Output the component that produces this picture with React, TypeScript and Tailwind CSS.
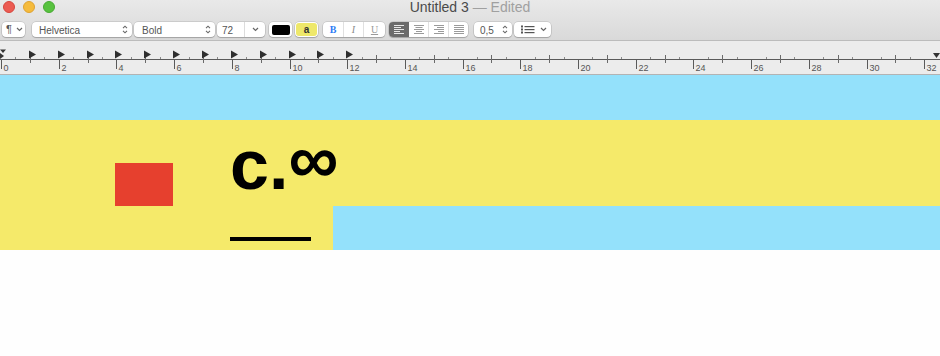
import React from 'react';

const U = 28.85;
const ux = (u: number) => 1 + u * U;

const UpDown = () => (
    <svg width="6" height="11" viewBox="0 0 6 11">
        <path d="M1 4.2L3 2.2L5 4.2M1 6.8L3 8.8L5 6.8" stroke="#666" strokeWidth="1.1" fill="none" />
    </svg>
);

const ChevronDown = () => (
    <svg width="7" height="5" viewBox="0 0 7 5">
        <path d="M1 1L3.5 3.5L6 1" stroke="#666" strokeWidth="1.2" fill="none" />
    </svg>
);

const AlignIcon = ({ kind, dark }: { kind: 'left' | 'center' | 'right' | 'justify'; dark?: boolean }) => {
    const widths = [10, 7, 10, 6, 10];
    const color = dark ? '#e8e8e8' : '#9a9a9a';
    return (
        <svg width="12" height="11" viewBox="0 0 12 11">
            {widths.map((w0, i) => {
                const w = kind === 'justify' ? 10 : w0;
                let x = 1;
                if (kind === 'center') x = 1 + (10 - w) / 2;
                if (kind === 'right') x = 11 - w;
                return <rect key={i} x={x} y={1 + i * 2} width={w} height="1" fill={color} />;
            })}
        </svg>
    );
};

const Ruler = () => {
    const units = Array.from({ length: 33 }, (_, i) => i);
    return (
        <svg width="940" height="33" viewBox="0 0 940 33" className="block">
            <line x1="0" y1="18.5" x2="940" y2="18.5" stroke="#5a5a5a" strokeWidth="1" />
            {units.map((u) => {
                const x = Math.round(ux(u)) + 0.5;
                if (u % 2 === 0) {
                    return (
                        <g key={u}>
                            <line x1={x} y1="18" x2={x} y2="28" stroke="#5a5a5a" strokeWidth="1" />
                            <text x={x + 2} y="29.5" fontSize="9" fill="#555" fontFamily="Liberation Sans, Arial, sans-serif">
                                {u}
                            </text>
                        </g>
                    );
                }
                return <line key={u} x1={x} y1="14" x2={x} y2="22" stroke="#6a6a6a" strokeWidth="1" />;
            })}
            {units.slice(0, 32).map((u) => {
                const x = Math.round(ux(u + 0.5)) + 0.5;
                return <line key={'h' + u} x1={x} y1="16" x2={x} y2="18" stroke="#8a8a8a" strokeWidth="1" />;
            })}
            {Array.from({ length: 12 }, (_, i) => i + 1).map((u) => {
                const x = Math.round(ux(u)) - 1;
                return <polygon key={'t' + u} points={`${x},9.5 ${x + 7},13.5 ${x},17.5`} fill="#2e2e2e" />;
            })}
            <polygon points="0,8.5 6,8.5 3,12" fill="#333" />
            <polygon points="0,12 4,15 0,18" fill="#333" />
            <polygon points="933,12 940,12 936.5,17" fill="#333" />
        </svg>
    );
};

const ctl = 'h-[15px] bg-white rounded-[4px] shadow-[0_0_0_0.5px_rgba(0,0,0,0.18),0_1px_1px_rgba(0,0,0,0.18)] flex items-center';

export default function App() {
    return (
        <div className="w-[940px] h-[356px] bg-[#fefefe] overflow-hidden font-['Liberation_Sans',Arial,sans-serif]">
            <div className="h-[41px] bg-gradient-to-b from-[#e9e9e9] to-[#d9d9d9] border-b border-[#bcbcbc]">
                <div className="grid grid-cols-[1fr_auto_1fr] h-[21px]">
                    <div className="flex gap-[8px] pl-[3px] pt-[1px]">
                        <span className="w-[12px] h-[12px] rounded-full bg-[#ec5b52] border border-[#d6463e]" />
                        <span className="w-[12px] h-[12px] rounded-full bg-[#f5bb3c] border border-[#dea232]" />
                        <span className="w-[12px] h-[12px] rounded-full bg-[#58c23f] border border-[#48a934]" />
                    </div>
                    <div className="text-[14px] leading-[14px] whitespace-nowrap">
                        <span className="text-[#4a4a4a]">Untitled 3</span>
                        <span className="text-[#a0a0a0]"> — Edited</span>
                    </div>
                    <div />
                </div>
                <div className="flex items-start pl-[2px] pt-[1px] text-[10px] text-[#555]">
                    <div className={`${ctl} w-[23px] pl-[4px] gap-[4px]`}>
                        <span className="text-[11px] leading-[15px]">¶</span>
                        <ChevronDown />
                    </div>
                    <div className={`${ctl} ml-[7px] w-[100px] pl-[7px] pr-[4px] justify-between`}>
                        <span className="leading-[15px] pt-[1px]">Helvetica</span>
                        <UpDown />
                    </div>
                    <div className={`${ctl} ml-[2px] w-[81px] pl-[8px] pr-[4px] justify-between`}>
                        <span className="leading-[15px] pt-[1px]">Bold</span>
                        <UpDown />
                    </div>
                    <div className={`${ctl} ml-[2px] w-[48px]`}>
                        <span className="w-[28px] pl-[5px] leading-[15px] pt-[1px] border-r border-[#dcdcdc] h-[15px]">72</span>
                        <span className="flex-1 flex justify-center">
                            <ChevronDown />
                        </span>
                    </div>
                    <div className={`${ctl} ml-[4px] w-[23px] justify-center`}>
                        <span className="w-[18px] h-[10px] rounded-[2px] bg-black" />
                    </div>
                    <div className={`${ctl} ml-[3px] w-[23px] justify-center`}>
                        <span className="w-[21px] h-[13px] rounded-[3px] bg-[#eee86a] flex items-center justify-center text-[10px] font-bold text-[#333] leading-none">
                            a
                        </span>
                    </div>
                    <div className={`${ctl} ml-[5px] w-[62px] font-['Liberation_Serif',serif] text-[10px]`}>
                        <span className="w-[21px] text-center font-bold text-[#2f7cf6] border-r border-[#e0e0e0] leading-[15px]">B</span>
                        <span className="w-[20px] text-center italic text-[#8a8a8a] border-r border-[#e0e0e0] leading-[15px]">I</span>
                        <span className="flex-1 text-center underline text-[#9a9a9a] leading-[15px]">U</span>
                    </div>
                    <div className={`${ctl} ml-[4px] w-[79px] overflow-hidden`}>
                        <span className="w-[20px] h-[15px] bg-[#6b6b6b] flex items-center justify-center">
                            <AlignIcon kind="left" dark />
                        </span>
                        <span className="w-[20px] h-[15px] border-r border-[#e0e0e0] flex items-center justify-center">
                            <AlignIcon kind="center" />
                        </span>
                        <span className="w-[20px] h-[15px] border-r border-[#e0e0e0] flex items-center justify-center">
                            <AlignIcon kind="right" />
                        </span>
                        <span className="flex-1 h-[15px] flex items-center justify-center">
                            <AlignIcon kind="justify" />
                        </span>
                    </div>
                    <div className={`${ctl} ml-[6px] w-[38px] pl-[6px] pr-[4px] justify-between`}>
                        <span className="leading-[15px] pt-[1px]">0,5</span>
                        <UpDown />
                    </div>
                    <div className={`${ctl} ml-[2px] w-[37px] pl-[7px] gap-[5px]`}>
                        <svg width="14" height="9" viewBox="0 0 14 9">
                            <rect x="0" y="0.5" width="2" height="2" fill="#555" />
                            <rect x="0" y="3.5" width="2" height="2" fill="#555" />
                            <rect x="0" y="6.5" width="2" height="2" fill="#555" />
                            <rect x="3.5" y="1" width="10" height="1.2" fill="#555" />
                            <rect x="3.5" y="4" width="10" height="1.2" fill="#555" />
                            <rect x="3.5" y="7" width="10" height="1.2" fill="#555" />
                        </svg>
                        <ChevronDown />
                    </div>
                </div>
            </div>
            <div className="h-[34px] bg-[#ececec] border-b border-[#b3b3b3]">
                <Ruler />
            </div>
            <div className="h-[45px] bg-[#94e1fb]" />
            <div className="bg-[#f5ea6a]">
                <div className="flex h-[86px]">
                    <div className="ml-[115px] mt-[43px] h-[43px] w-[58px] bg-[#e6402e]" />
                    <div className="ml-[57px] mt-[3px] text-[70px] leading-[72px] font-bold text-black whitespace-nowrap">
                        c.<span className="align-[6px]">∞</span>
                    </div>
                </div>
                <div className="flex h-[44px]">
                    <div className="w-[333px] shrink-0 pl-[230px] pt-[31px]">
                        <div className="h-[4px] w-[81px] bg-black" />
                    </div>
                    <div className="flex-1 bg-[#94e1fb]" />
                </div>
            </div>
        </div>
    );
}
